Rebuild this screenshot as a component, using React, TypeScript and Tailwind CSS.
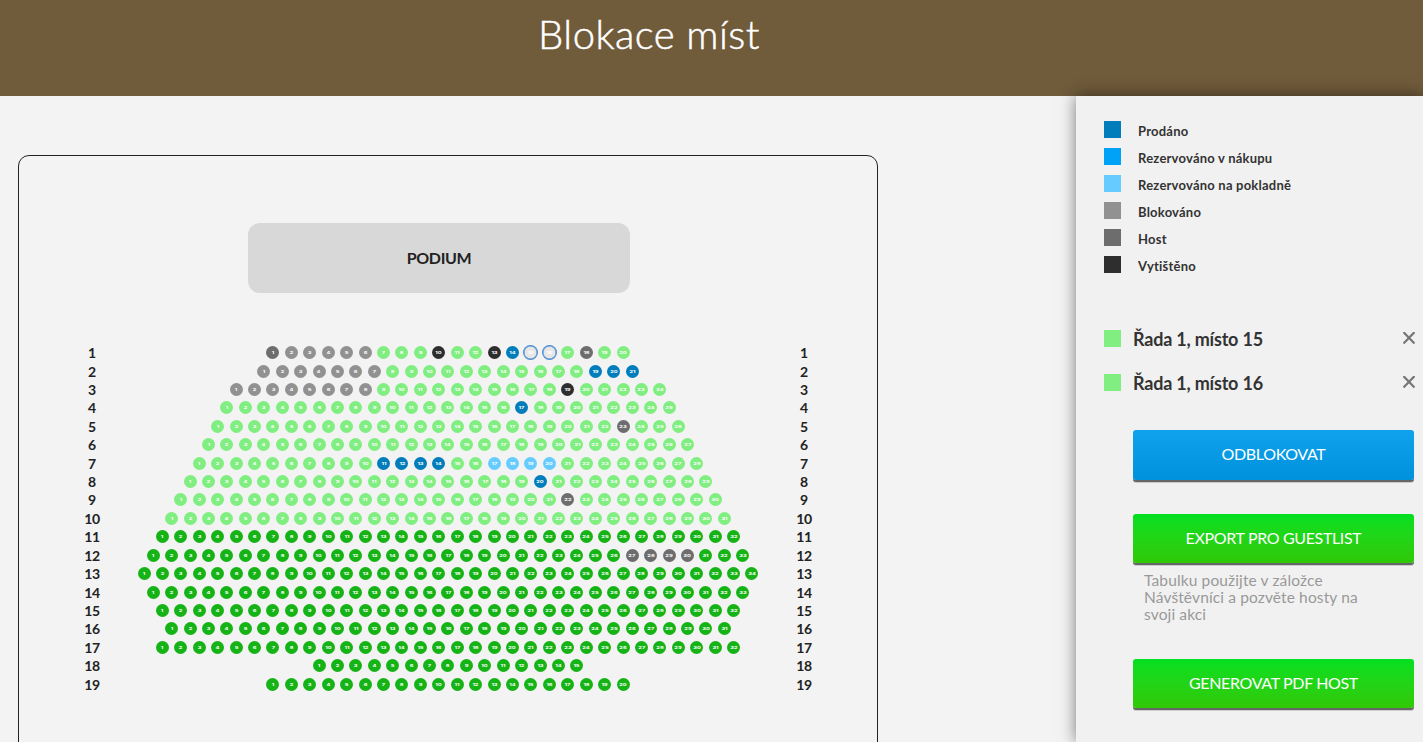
import React from "react";

type Status = "sold" | "cash" | "blocked" | "host" | "printed" | "free" | "balcony" | "selected";

const seatStyle: Record<Status, string> = {
  sold: "bg-[#007dba] text-white",
  cash: "bg-[#66ccff] text-white",
  blocked: "bg-[#919191] text-white",
  host: "bg-[#6d6d6d] text-white",
  printed: "bg-[#2e2e2e] text-white",
  free: "bg-[#80ee80] text-white",
  balcony: "bg-[#16b316] text-white",
  selected: "bg-[#e6e6e6] text-white shadow-[0_0_0_1px_#4a8bd0,inset_0_0_0_0.5px_#4a8bd0]",
};

type Range = [number, number, Status];

const rows: { seats: number; base: Status; marks?: Range[] }[] = [
  {
    seats: 20,
    base: "free",
    marks: [
      [1, 1, "host"],
      [2, 6, "blocked"],
      [10, 10, "printed"],
      [13, 13, "printed"],
      [14, 14, "sold"],
      [15, 16, "selected"],
      [18, 18, "host"],
    ],
  },
  { seats: 21, base: "free", marks: [[1, 7, "blocked"], [19, 21, "sold"]] },
  { seats: 24, base: "free", marks: [[1, 8, "blocked"], [19, 19, "printed"]] },
  { seats: 25, base: "free", marks: [[17, 17, "sold"]] },
  { seats: 26, base: "free", marks: [[23, 23, "host"]] },
  { seats: 27, base: "free" },
  { seats: 28, base: "free", marks: [[11, 14, "sold"], [17, 20, "cash"]] },
  { seats: 29, base: "free", marks: [[20, 20, "sold"]] },
  { seats: 30, base: "free", marks: [[22, 22, "host"]] },
  { seats: 31, base: "free" },
  { seats: 32, base: "balcony" },
  { seats: 33, base: "balcony", marks: [[27, 30, "host"]] },
  { seats: 34, base: "balcony" },
  { seats: 33, base: "balcony" },
  { seats: 32, base: "balcony" },
  { seats: 31, base: "balcony" },
  { seats: 32, base: "balcony" },
  { seats: 15, base: "balcony" },
  { seats: 20, base: "balcony" },
];

function Seat({ n, status }: { n: number; status: Status }) {
  return (
    <div className="flex w-[18.43px] shrink-0 justify-center">
      <div className={`flex size-[13px] items-center justify-center rounded-full ${seatStyle[status]}`}>
        <span className="translate-y-[0.4px] scale-x-125 scale-y-85 font-['Inter'] text-[4.6px] leading-[5px] font-bold">
          {n}
        </span>
      </div>
    </div>
  );
}

function RowLabel({ n }: { n: number }) {
  return (
    <span className="w-8 pt-px text-center text-[14px] leading-none font-bold tracking-[-0.3px] text-[#222]">
      {n}
    </span>
  );
}

const legend = [
  ["bg-[#007dba]", "Prodáno"],
  ["bg-[#00a2f8]", "Rezervováno v nákupu"],
  ["bg-[#66ccff]", "Rezervováno na pokladně"],
  ["bg-[#919191]", "Blokováno"],
  ["bg-[#6d6d6d]", "Host"],
  ["bg-[#2e2e2e]", "Vytištěno"],
];

function Button({ tone, children }: { tone: "blue" | "green"; children: React.ReactNode }) {
  const fill =
    tone === "blue" ? "h-[50px] pb-[2px] from-[#10a2ec] to-[#0091dc]" : "h-[49px] pb-px from-[#00e021] to-[#2fc906]";
  return (
    <button
      className={`flex w-[281px] shrink-0 items-center justify-center rounded-[3px] bg-linear-to-b text-[16px] tracking-[-0.35px] text-white shadow-[0_2px_0_#666,0_3px_0_#ccc] ${fill}`}
    >
      {children}
    </button>
  );
}

export default function App() {
  return (
    <div className="flex h-[742px] w-[1423px] flex-col overflow-hidden bg-[#f3f3f3] font-['Lato','Open_Sans',sans-serif]">
      <header className="h-24 shrink-0 bg-[#705b3b] pr-[125px] pt-[10px] text-center">
        <h1 className="text-[40px] leading-[48px] font-light tracking-[0.45px] text-white [-webkit-text-stroke:0.5px_white]">
          Blokace míst
        </h1>
      </header>
      <div className="flex min-h-0 flex-1">
        <main className="min-w-0 flex-1 pl-[18px] pt-[59px]">
          <section className="flex h-[700px] w-[860px] flex-col rounded-[11px] border border-[#222] pt-[67px]">
            <div className="ml-[229px] flex h-[70px] w-[382px] shrink-0 items-center justify-center rounded-[12px] bg-[#d8d8d8] text-[16px] font-bold tracking-[-0.4px] text-[#222]">
              PODIUM
            </div>
            <div className="mt-[50.4px] flex flex-col">
              {rows.map((row, r) => (
                <div key={r} className="flex h-[18.43px] items-center justify-between px-[57px]">
                  <RowLabel n={r + 1} />
                  <div className="flex">
                    {Array.from({ length: row.seats }, (_, i) => {
                      const n = i + 1;
                      const mark = row.marks?.find(([a, b]) => n >= a && n <= b);
                      return <Seat key={n} n={n} status={mark ? mark[2] : row.base} />;
                    })}
                  </div>
                  <RowLabel n={r + 1} />
                </div>
              ))}
            </div>
          </section>
        </main>
        <aside className="flex w-[347px] shrink-0 flex-col bg-[#f1f1f1] pl-7 pt-[25px] text-[#333] shadow-[0_0_15px_rgba(0,0,0,0.5)]">
          <ul className="flex flex-col gap-[10px]">
            {legend.map(([color, label]) => (
              <li key={label} className="flex h-[17px] gap-[17px]">
                <span className={`size-[17px] ${color}`} />
                <span className="pt-[2px] text-[13px] leading-[17px] font-bold tracking-[0.22px]">{label}</span>
              </li>
            ))}
          </ul>
          <ul className="mt-[57px] flex flex-col gap-[27px]">
            {[15, 16].map((n) => (
              <li key={n} className="flex h-[17px] items-center pr-2">
                <span className="size-[17px] bg-[#80ee80]" />
                <span className="ml-3 flex-1 pt-px text-[18px] leading-[17px] font-bold tracking-[-0.2px]">
                  Řada 1, místo {n}
                </span>
                <svg viewBox="0 0 12 12" className="mb-[2px] size-3 stroke-[#777]" strokeWidth="2.2" fill="none">
                  <path d="M.5.1l11 11.4M11.5.1.5 11.5" />
                </svg>
              </li>
            ))}
          </ul>
          <div className="mt-[39px] flex flex-col pl-[29px]">
            <Button tone="blue">ODBLOKOVAT</Button>
            <div className="h-[34px]" />
            <Button tone="green">EXPORT PRO GUESTLIST</Button>
            <p className="mt-[9px] ml-[11px] h-[87px] w-[225px] text-[15.5px] leading-[17px] tracking-[0.13px] text-[#999]">
              Tabulku použijte v záložce Návštěvníci a pozvěte hosty na svoji akci
            </p>
            <Button tone="green">GENEROVAT PDF HOST</Button>
          </div>
        </aside>
      </div>
    </div>
  );
}
